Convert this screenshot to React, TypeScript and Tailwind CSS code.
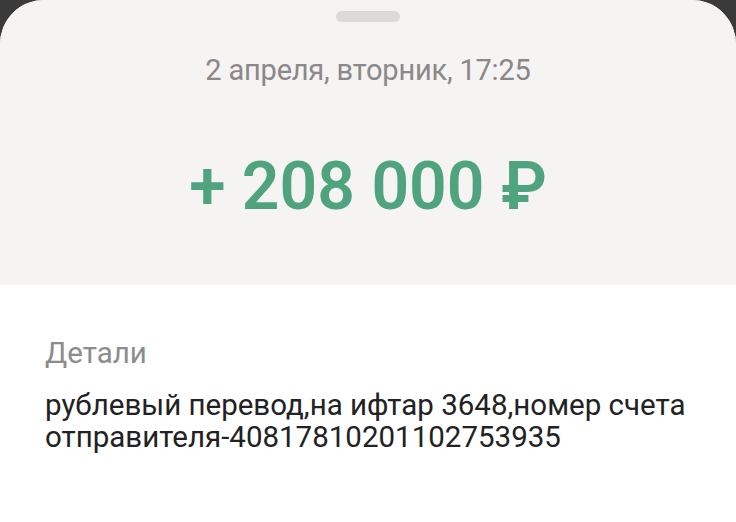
import React from 'react';

export default function App() {
  return (
    <div className="w-[736px] h-[522px] bg-[#3a3a3a] overflow-hidden" style={{ fontFamily: 'Roboto, "Noto Sans", sans-serif' }}>
      <div className="h-full rounded-t-[44px] overflow-hidden bg-white flex flex-col">
        <div className="h-[285px] bg-[#f6f3f3] flex flex-col items-center">
          <div className="mt-[11px] w-[64px] h-[11px] rounded-full bg-[#dcd9d8]" />
          <div className="mt-[31px] text-[29px] leading-[34px] text-[#8a8888] tracking-[-0.2px]">
            2 апреля, вторник, 17:25
          </div>
          <div className="mt-[62px] text-[66px] leading-[76px] font-semibold text-[#4fa47f]">
            + 208 000 ₽
          </div>
        </div>
        <div className="px-[45px] pt-[52px]">
          <div className="text-[29.5px] leading-[32px] text-[#8c8c8c]">Детали</div>
          <div className="text-[29.5px] leading-[32px] text-[#222222] mt-[20px]">
            рублевый перевод,на ифтар 3648,номер счета
            <br />
            отправителя-40817810201102753935
          </div>
        </div>
      </div>
    </div>
  );
}
